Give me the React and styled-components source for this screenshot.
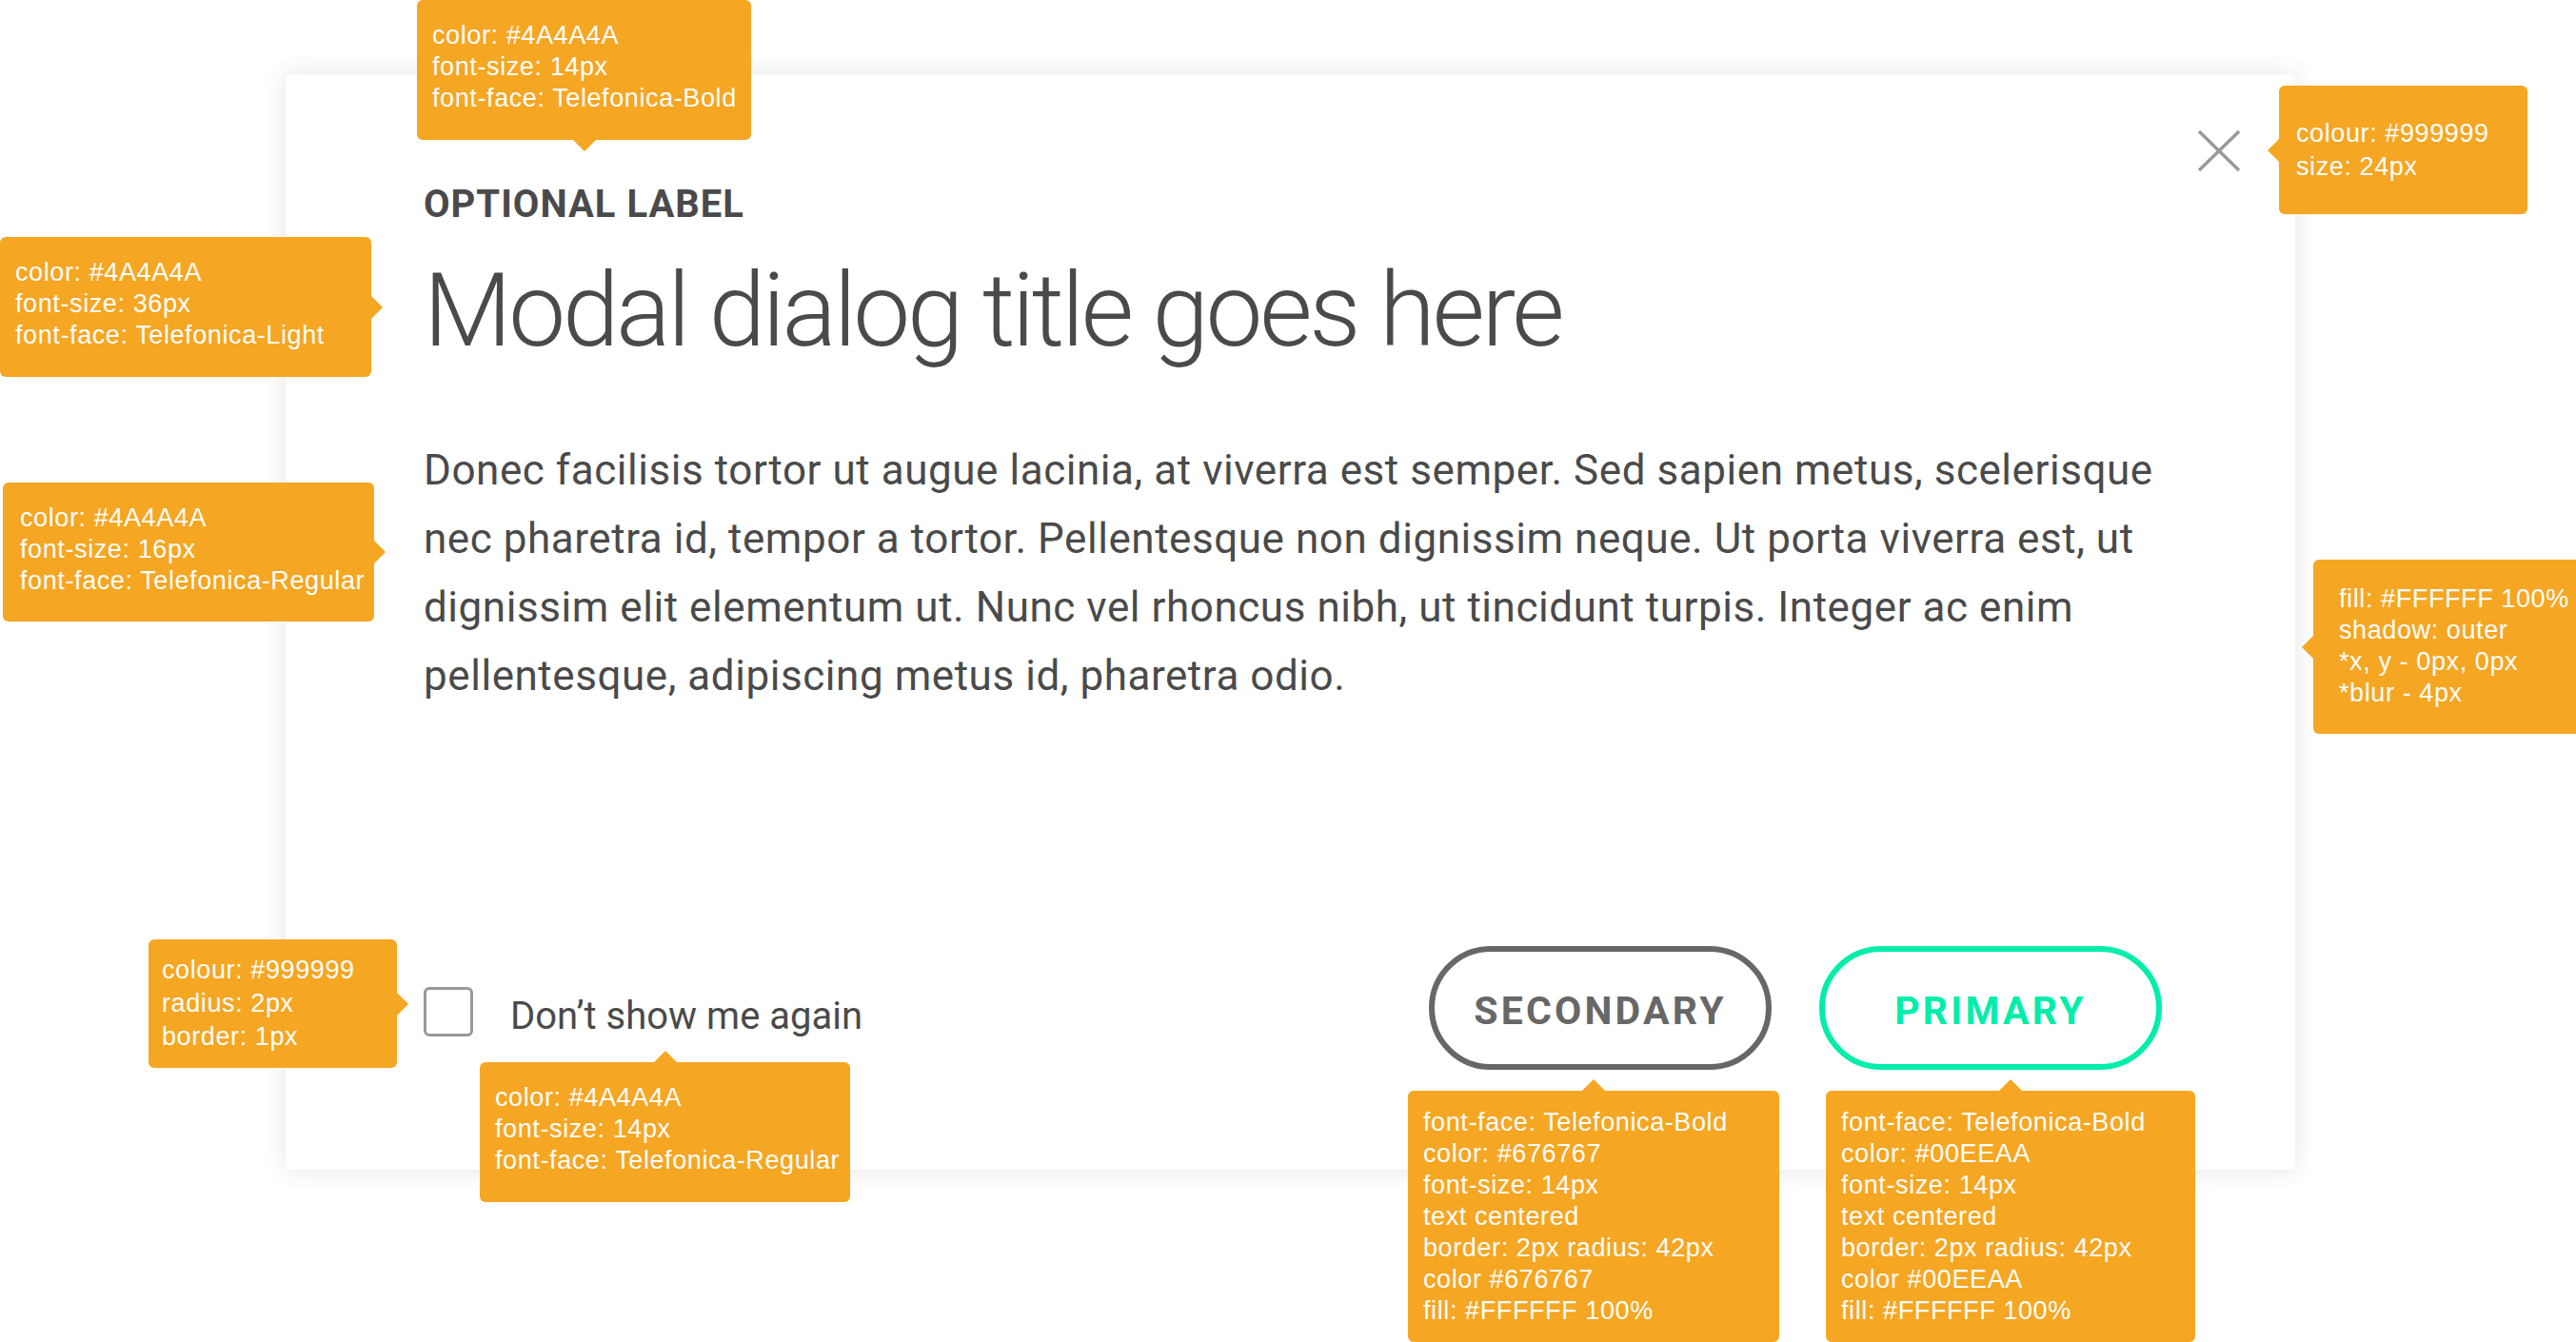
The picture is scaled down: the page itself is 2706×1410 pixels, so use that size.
import React from 'react';
import styled, { createGlobalStyle, css } from 'styled-components';

const GlobalStyle = createGlobalStyle`
  html, body {
    margin: 0;
    padding: 0;
    background: #ffffff;
  }
  * {
    box-sizing: border-box;
  }
`;

const ORANGE = '#F5A623';
const TEXT = '#4A4A4A';

const Canvas = styled.div`
  position: relative;
  width: 2706px;
  height: 1410px;
  overflow: hidden;
  padding: 78px 0 0 300px;
  background: #ffffff;
  font-family: Roboto, "Noto Sans", sans-serif;
`;

const Modal = styled.div`
  position: relative;
  display: flex;
  flex-direction: column;
  width: 2111px;
  height: 1151px;
  padding: 117px 140px 105px 145px;
  background: #ffffff;
  border-radius: 5px;
  box-shadow: 0 0 26px rgba(0, 0, 0, 0.11);
`;

const CloseButton = styled.button`
  position: absolute;
  top: 45px;
  right: 45px;
  width: 70px;
  height: 70px;
  padding: 0;
  border: none;
  background: transparent;
  color: #999999;
  cursor: pointer;

  svg {
    display: block;
    width: 70px;
    height: 70px;
  }
`;

const Label = styled.div`
  font-size: 40px;
  line-height: 1;
  font-weight: 700;
  letter-spacing: 1px;
  color: ${TEXT};
  text-transform: uppercase;
`;

const Title = styled.h1`
  margin: 38px 0 0;
  font-size: 107px;
  line-height: 1;
  font-weight: 300;
  letter-spacing: -3.3px;
  color: ${TEXT};
`;

const Body = styled.p`
  margin: 78px -24px 0 0;
  font-size: 44px;
  line-height: 72px;
  font-weight: 400;
  letter-spacing: 0.55px;
  color: ${TEXT};
`;

const Footer = styled.div`
  margin-top: auto;
  display: flex;
  align-items: center;
  justify-content: space-between;
`;

const CheckRow = styled.label`
  display: flex;
  align-items: center;
  gap: 39px;
  padding-top: 7px;
  cursor: pointer;
`;

const CheckBox = styled.span`
  width: 52px;
  height: 52px;
  border: 3px solid #999999;
  border-radius: 6px;
  background: #ffffff;
`;

const CheckText = styled.span`
  font-size: 40px;
  line-height: 1;
  color: ${TEXT};
  padding-top: 10px;
`;

const Buttons = styled.div`
  display: flex;
  gap: 50px;
`;

const PillButton = styled.button`
  width: 360px;
  height: 130px;
  border: 6px solid ${(p) => p.$color};
  border-radius: 122px;
  background: #ffffff;
  color: ${(p) => p.$color};
  font-family: Roboto, "Noto Sans", sans-serif;
  font-size: 41px;
  font-weight: 700;
  letter-spacing: 3.2px;
  text-align: center;
  text-transform: uppercase;
  cursor: pointer;
  padding: 6px 0 0;
`;

const arrows = {
  top: css`
    left: 50%;
    bottom: 100%;
    margin-left: -12px;
    border-width: 0 12px 12px 12px;
    border-color: transparent transparent ${ORANGE} transparent;
  `,
  bottom: css`
    left: 50%;
    top: 100%;
    margin-left: -12px;
    border-width: 12px 12px 0 12px;
    border-color: ${ORANGE} transparent transparent transparent;
  `,
  left: css`
    top: 50%;
    right: 100%;
    margin-top: -12px;
    border-width: 12px 12px 12px 0;
    border-color: transparent ${ORANGE} transparent transparent;
  `,
  right: css`
    top: 50%;
    left: 100%;
    margin-top: -12px;
    border-width: 12px 0 12px 12px;
    border-color: transparent transparent transparent ${ORANGE};
  `,
};

const Callout = styled.div`
  position: absolute;
  left: ${(p) => p.$x}px;
  top: ${(p) => p.$y}px;
  width: ${(p) => p.$w}px;
  height: ${(p) => p.$h}px;
  display: flex;
  flex-direction: column;
  justify-content: center;
  padding: 0 ${(p) => p.$pad || 16}px ${(p) => p.$shift ?? 6}px;
  background: ${ORANGE};
  border-radius: 6px;
  color: #ffffff;
  font-family: "Liberation Sans", Arial, sans-serif;
  font-size: 27px;
  line-height: ${(p) => p.$lh || 33}px;
  letter-spacing: 0.6px;
  white-space: nowrap;
  z-index: 2;

  &::after {
    content: '';
    position: absolute;
    width: 0;
    height: 0;
    border-style: solid;
    ${(p) => arrows[p.$arrow]}
  }
`;

const CloseIcon = () => (
  <svg viewBox="0 0 70 70" fill="none" stroke="currentColor" strokeWidth="3.4">
    <line x1="14" y1="15" x2="56" y2="56" />
    <line x1="56" y1="15" x2="14" y2="56" />
  </svg>
);

const notes = [
  { x: 438, y: 0, w: 351, h: 147, arrow: 'bottom', lines: ['color: #4A4A4A', 'font-size: 14px', 'font-face: Telefonica-Bold'] },
  { x: 0, y: 249, w: 390, h: 147, arrow: 'right', lines: ['color: #4A4A4A', 'font-size: 36px', 'font-face: Telefonica-Light'] },
  { x: 3, y: 507, w: 390, h: 146, arrow: 'right', pad: 18, lines: ['color: #4A4A4A', 'font-size: 16px', 'font-face: Telefonica-Regular'] },
  { x: 156, y: 987, w: 261, h: 135, arrow: 'right', pad: 14, lh: 35, shift: 0, lines: ['colour: #999999', 'radius: 2px', 'border: 1px'] },
  { x: 504, y: 1116, w: 389, h: 147, arrow: 'top', lines: ['color: #4A4A4A', 'font-size: 14px', 'font-face: Telefonica-Regular'] },
  { x: 2394, y: 90, w: 261, h: 135, arrow: 'left', pad: 18, lh: 35, shift: 0, lines: ['colour: #999999', 'size: 24px'] },
  { x: 2430, y: 588, w: 300, h: 183, arrow: 'left', pad: 27, shift: 2, lines: ['fill: #FFFFFF 100%', 'shadow: outer', '*x, y - 0px, 0px', '*blur - 4px'] },
  { x: 1479, y: 1146, w: 390, h: 264, arrow: 'top', shift: 0, lines: ['font-face: Telefonica-Bold', 'color: #676767', 'font-size: 14px', 'text centered', 'border: 2px radius: 42px', 'color #676767', 'fill: #FFFFFF  100%'] },
  { x: 1918, y: 1146, w: 388, h: 264, arrow: 'top', shift: 0, lines: ['font-face: Telefonica-Bold', 'color: #00EEAA', 'font-size: 14px', 'text centered', 'border: 2px radius: 42px', 'color #00EEAA', 'fill: #FFFFFF  100%'] },
];

const App = () => {
  return (
    <>
      <GlobalStyle />
      <Canvas>
        <Modal>
          <CloseButton aria-label="Close">
            <CloseIcon />
          </CloseButton>
          <Label>Optional label</Label>
          <Title>Modal dialog title goes here</Title>
          <Body>
            Donec facilisis tortor ut augue lacinia, at viverra est semper. Sed sapien metus, scelerisque
            nec pharetra id, tempor a tortor. Pellentesque non dignissim neque. Ut porta viverra est, ut
            dignissim elit elementum ut. Nunc vel rhoncus nibh, ut tincidunt turpis. Integer ac enim
            pellentesque, adipiscing metus id, pharetra odio.
          </Body>
          <Footer>
            <CheckRow>
              <CheckBox />
              <CheckText>Don’t show me again</CheckText>
            </CheckRow>
            <Buttons>
              <PillButton $color="#676767">Secondary</PillButton>
              <PillButton $color="#00EEAA">Primary</PillButton>
            </Buttons>
          </Footer>
        </Modal>

        {notes.map((n, i) => (
          <Callout
            key={i}
            $x={n.x}
            $y={n.y}
            $w={n.w}
            $h={n.h}
            $arrow={n.arrow}
            $pad={n.pad}
            $lh={n.lh}
            $shift={n.shift}
          >
            {n.lines.map((l) => (
              <span key={l}>{l}</span>
            ))}
          </Callout>
        ))}
      </Canvas>
    </>
  );
};

export default App;
